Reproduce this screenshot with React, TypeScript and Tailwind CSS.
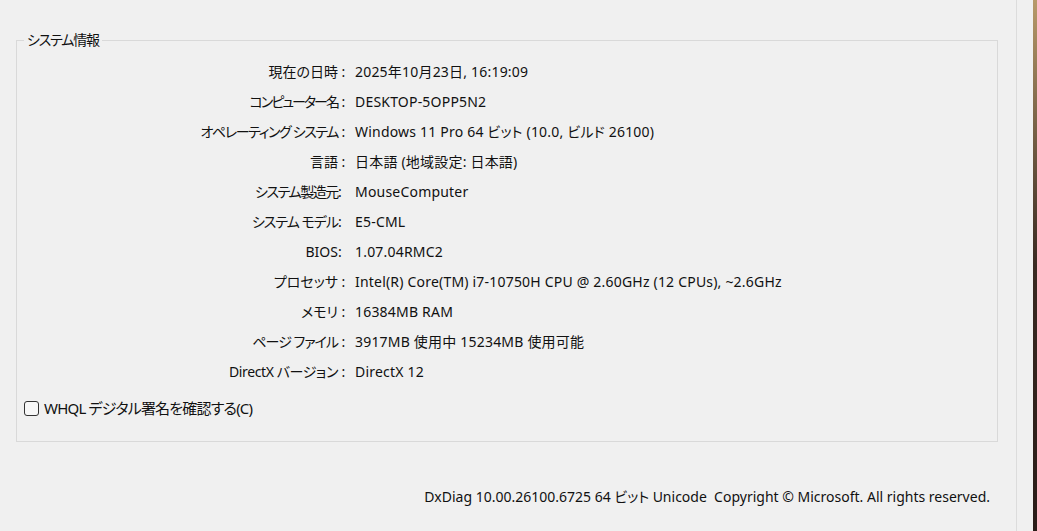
import React from "react";

const rows: { label: string; sep: string; value: string; tight?: string }[] = [
  { label: "現在の日時", sep: " : ", value: "2025年10月23日, 16:19:09" },
  { label: "コンピューター名", sep: " : ", value: "DESKTOP-5OPP5N2", tight: "tracking-[-2px]" },
  { label: "オペレーティング システム", sep: " : ", value: "Windows 11 Pro 64 ビット (10.0, ビルド 26100)", tight: "tracking-[-1.4px]" },
  { label: "言語", sep: " : ", value: "日本語 (地域設定: 日本語)" },
  { label: "システム製造元", sep: ":  ", value: "MouseComputer", tight: "tracking-[-1.4px]" },
  { label: "システム モデル", sep: ":  ", value: "E5-CML", tight: "tracking-[-1px]" },
  { label: "BIOS", sep: ":  ", value: "1.07.04RMC2" },
  { label: "プロセッサ", sep: " : ", value: "Intel(R) Core(TM) i7-10750H CPU @ 2.60GHz (12 CPUs), ~2.6GHz" },
  { label: "メモリ", sep: " : ", value: "16384MB RAM" },
  { label: "ページ ファイル", sep: " : ", value: "3917MB 使用中 15234MB 使用可能", tight: "tracking-[-1px]" },
  { label: "DirectX バージョン", sep: " : ", value: "DirectX 12", tight: "tracking-[-0.4px]" },
];

const font = {
  fontFamily: '"Noto Sans", "Noto Sans CJK JP", sans-serif',
};

export default function App() {
  return (
    <div
      className="flex h-[531px] w-[1037px] bg-[#f0f0f0] text-[#111] text-[14px] leading-none overflow-hidden [font-feature-settings:'palt']"
      style={font}
    >
      <div className="flex flex-col w-[1016px] pt-[33px] pl-4 pr-[18px]">
        <fieldset className="border border-[#d9d9d9] h-[409px] px-0 pb-0 m-0 min-w-0">
          <legend className="ml-[7px] px-[3px] text-[14px] tracking-[-1.2px]">システム情報</legend>
          <div className="flex flex-col pt-[10px]">
            {rows.map((r) => (
              <div key={r.label} className="flex h-[30px] items-center">
                <div className="w-[332px] text-right whitespace-pre">
                  <span className={r.tight ?? ""}>{r.label}</span>
                  {r.sep}
                </div>
                <div className="pl-[6px] whitespace-pre tracking-[0.2px]">{r.value}</div>
              </div>
            ))}
          </div>
          <label className="flex items-center gap-[5px] pl-[7px] mt-[14px]">
            <span className="w-[15px] h-[15px] border border-[#333] rounded-[3px] bg-[#f7f7f7]" />
            <span className="text-[15px] tracking-[-0.8px]">WHQL デジタル署名を確認する(C)</span>
          </label>
        </fieldset>
        <div className="flex justify-end pr-[8px] mt-[48px] whitespace-pre">
          {"DxDiag 10.00.26100.6725 64 ビット Unicode  Copyright © Microsoft. All rights reserved."}
        </div>
      </div>
      <div className="w-px bg-[#dcdcdc]" />
      <div className="w-4" />
      <div className="w-1 bg-gradient-to-b from-[#b89a6a] via-[#3a2a22] to-[#2a1c18]" />
    </div>
  );
}
